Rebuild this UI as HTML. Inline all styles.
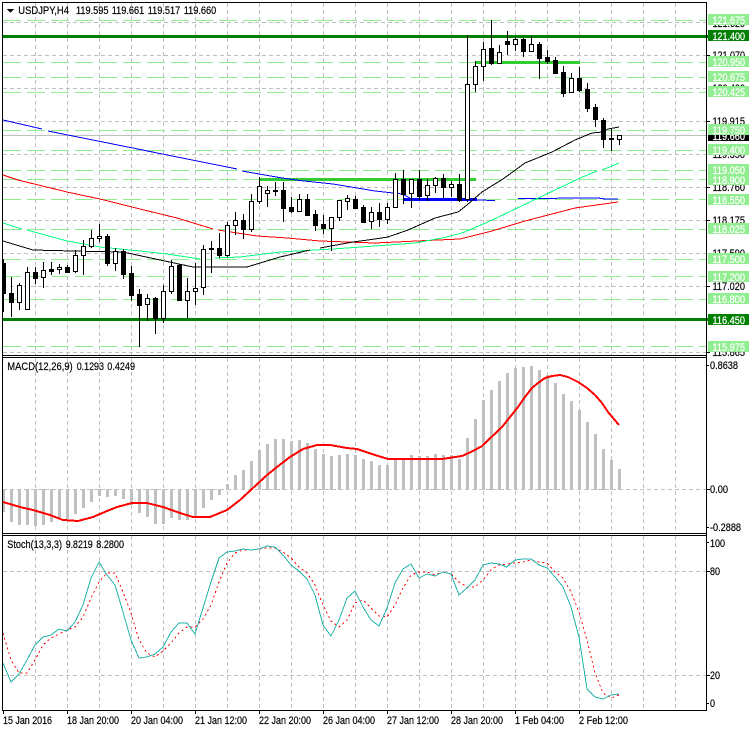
<!DOCTYPE html>
<html><head><meta charset="utf-8"><title>USDJPY,H4</title>
<style>
html,body{margin:0;padding:0;background:#fff;width:749px;height:731px;overflow:hidden}
svg{display:block}
text{font-family:"Liberation Sans",sans-serif;font-size:11px;fill:#000;stroke:#000;stroke-width:.2}
.w{fill:#fff;stroke:#fff;stroke-width:.25}
</style></head><body>
<svg width="749" height="731" viewBox="0 0 749 731" xmlns="http://www.w3.org/2000/svg">
<rect width="749" height="731" fill="#fff"/>
<defs>
<clipPath id="cm"><rect x="3" y="3" width="703" height="352"/></clipPath>
<clipPath id="cd"><rect x="3" y="358" width="703" height="175"/></clipPath>
<clipPath id="cs"><rect x="3" y="536" width="703" height="174"/></clipPath>
</defs>
<g shape-rendering="crispEdges" fill="none">
<!-- vertical grid -->
<path stroke="#c0c0c0" stroke-dasharray="4 3" d="M35.5 3V355M67.5 3V355M99.5 3V355M131.5 3V355M163.5 3V355M195.5 3V355M227.5 3V355M259.5 3V355M291.5 3V355M323.5 3V355M355.5 3V355M387.5 3V355M419.5 3V355M451.5 3V355M483.5 3V355M515.5 3V355M547.5 3V355M579.5 3V355M611.5 3V355M643.5 3V355M675.5 3V355
M35.5 358V533M67.5 358V533M99.5 358V533M131.5 358V533M163.5 358V533M195.5 358V533M227.5 358V533M259.5 358V533M291.5 358V533M323.5 358V533M355.5 358V533M387.5 358V533M419.5 358V533M451.5 358V533M483.5 358V533M515.5 358V533M547.5 358V533M579.5 358V533M611.5 358V533M643.5 358V533M675.5 358V533
M35.5 536V710M67.5 536V710M99.5 536V710M131.5 536V710M163.5 536V710M195.5 536V710M227.5 536V710M259.5 536V710M291.5 536V710M323.5 536V710M355.5 536V710M387.5 536V710M419.5 536V710M451.5 536V710M483.5 536V710M515.5 536V710M547.5 536V710M579.5 536V710M611.5 536V710M643.5 536V710M675.5 536V710"/>
<!-- horizontal grid -->
<path stroke="#c0c0c0" stroke-dasharray="4 3" d="M3 22.5H706M3 55.5H706M3 88.5H706M3 121.5H706M3 154.5H706M3 187.5H706M3 220.5H706M3 253.5H706M3 286.5H706M3 352.5H706M3 489.5H706M3 571.5H706M3 675.5H706"/>
<!-- light green levels -->
<path stroke="#90ee90" stroke-dasharray="18 6" d="M3 20.5H706M3 62.5H706M3 77.5H706M3 92.5H706M3 130.5H706M3 150.5H706M3 170.5H706M3 179.5H706M3 199.5H706M3 229.5H706M3 259.5H706M3 276.5H706M3 299.5H706M3 346.5H706"/>
<!-- bid line -->
<path stroke="#c0c0c0" d="M3 135.5H706"/>
<!-- strong levels -->
<rect x="3" y="35" width="705" height="3" fill="#008000"/>
<rect x="3" y="318" width="705" height="3" fill="#008000"/>
<rect x="259" y="178" width="217" height="3" fill="#32cd32"/>
<rect x="476" y="61" width="104" height="3" fill="#32cd32"/>
<rect x="403" y="198" width="74" height="3" fill="#0000ff"/>
<g clip-path="url(#cm)" stroke-width="1">
<!-- blue MA -->
<path stroke="#0000ff" d="M3 120L42 129M48 131L237 169M242 171L282 178L304 181L333 184L375 191L402 194L410 198M477 200L495 200.5M518 198.5L598 198L605 199L618 199"/>
<!-- red MA -->
<path stroke="#ff0000" d="M3 175L18 180L67 192L100 199L140 209L177 218L213 229M218 230L257 236L287 238L320 241L375 243L438 240L460 239L492 231L525 221L575 208L618 202"/>
<!-- green MA -->
<path stroke="#00ff7f" d="M3 223L22 229M27 230L67 241L100 247L140 251L167 254L200 259M215 258L240 257L280 252L333 249L375 246L415 243L442 238L462 233L488 222L532 201L578 179L597 171M602 170L619 163"/>
<!-- black MA -->
<path stroke="#000" d="M3 241L33 250L73 251L123 252L160 260L193 267L247 267L280 257L310 250M320 248L353 242L375 239L388 237L408 230L435 218L458 212L467 205L482 192L503 179L525 163L552 152L575 140L592 133L602 132L608 129L619 127"/>
<!-- wicks -->
<path stroke="#000" stroke-width="1" d="M3.5 259V312M11.5 277V317M19.5 283V310M27.5 267V309M35.5 267V284M43.5 262V288M51.5 262V275M59.5 264V274M67.5 265V272M75.5 250V273M83.5 240V275M91.5 230V248M99.5 224V242M107.5 234V266M115.5 248V271M123.5 249V279M131.5 266V301M139.5 289V347M147.5 294V321M155.5 297V334M163.5 285V323M171.5 260V294M179.5 264V301M187.5 278V318M195.5 263V305M203.5 245V295M211.5 241V273M219.5 233V258M227.5 222V257M235.5 212V235M243.5 214V239M251.5 194V232M259.5 177V204M267.5 186V207M275.5 182V196M283.5 182V222M291.5 197V213M299.5 194V212M307.5 194V215M315.5 210V231M323.5 215V234M331.5 217V251M339.5 200V221M347.5 195V210M355.5 196V209M363.5 205V223M371.5 207V229M379.5 203V227M387.5 203V224M395.5 173V208M403.5 170V204M411.5 179V208M419.5 170V200M427.5 179V201M435.5 177V193M443.5 174V198M451.5 181V197M459.5 174V202M467.5 35V202M475.5 61V92M483.5 42V81M491.5 20V65M499.5 45V64M507.5 31V55M515.5 37V51M523.5 38V57M531.5 36V51M539.5 42V79M547.5 50V64M555.5 57V74M563.5 66V97M571.5 73V93M579.5 67V92M587.5 83V112M595.5 104V127M603.5 118V148M611.5 129V151M619.5 135V145"/>
<!-- black bodies -->
<path stroke="#000" stroke-width="1" fill="#000" d="M1.5 263.5h4V293.5h-4zM9.5 293.5h4V302.5h-4zM33.5 272.5h4V278.5h-4zM49.5 269.5h4V271.5h-4zM65.5 267.5h4V272.5h-4zM105.5 236.5h4V263.5h-4zM121.5 251.5h4V274.5h-4zM129.5 273.5h4V295.5h-4zM137.5 294.5h4V305.5h-4zM153.5 298.5h4V318.5h-4zM177.5 265.5h4V300.5h-4zM209.5 248.5h4V249.5h-4zM217.5 248.5h4V255.5h-4zM241.5 220.5h4V229.5h-4zM273.5 190.5h4V191.5h-4zM281.5 190.5h4V208.5h-4zM289.5 207.5h4V211.5h-4zM305.5 199.5h4V215.5h-4zM313.5 214.5h4V225.5h-4zM321.5 224.5h4V228.5h-4zM353.5 199.5h4V208.5h-4zM361.5 207.5h4V222.5h-4zM377.5 212.5h4V219.5h-4zM401.5 179.5h4V194.5h-4zM417.5 179.5h4V196.5h-4zM441.5 178.5h4V187.5h-4zM457.5 184.5h4V200.5h-4zM489.5 48.5h4V63.5h-4zM505.5 41.5h4V44.5h-4zM521.5 39.5h4V51.5h-4zM537.5 44.5h4V58.5h-4zM545.5 57.5h4V61.5h-4zM553.5 60.5h4V73.5h-4zM561.5 72.5h4V93.5h-4zM577.5 78.5h4V90.5h-4zM585.5 89.5h4V108.5h-4zM593.5 107.5h4V119.5h-4zM601.5 120.5h4V139.5h-4zM609.5 138.5h4V139.5h-4z"/>
<!-- white bodies -->
<path stroke="#000" stroke-width="1" fill="#fff" d="M17.5 285.5h4V302.5h-4zM25.5 272.5h4V309.5h-4zM41.5 270.5h4V277.5h-4zM57.5 267.5h4V269.5h-4zM73.5 255.5h4V271.5h-4zM81.5 246.5h4V255.5h-4zM89.5 238.5h4V246.5h-4zM97.5 236.5h4V238.5h-4zM113.5 251.5h4V263.5h-4zM145.5 298.5h4V304.5h-4zM161.5 291.5h4V318.5h-4zM169.5 266.5h4V291.5h-4zM185.5 291.5h4V300.5h-4zM193.5 288.5h4V291.5h-4zM201.5 249.5h4V287.5h-4zM225.5 225.5h4V255.5h-4zM233.5 220.5h4V225.5h-4zM249.5 201.5h4V229.5h-4zM257.5 186.5h4V201.5h-4zM265.5 190.5h4V193.5h-4zM297.5 199.5h4V211.5h-4zM329.5 217.5h4V228.5h-4zM337.5 200.5h4V217.5h-4zM345.5 198.5h4V201.5h-4zM369.5 212.5h4V221.5h-4zM385.5 207.5h4V219.5h-4zM393.5 179.5h4V207.5h-4zM409.5 179.5h4V193.5h-4zM425.5 185.5h4V195.5h-4zM433.5 178.5h4V185.5h-4zM449.5 184.5h4V187.5h-4zM465.5 84.5h4V199.5h-4zM473.5 66.5h4V84.5h-4zM481.5 49.5h4V66.5h-4zM497.5 52.5h4V63.5h-4zM513.5 39.5h4V44.5h-4zM529.5 44.5h4V51.5h-4zM569.5 78.5h4V92.5h-4zM617.5 135.5h4V139.5h-4z"/>
</g>
<!-- MACD histogram -->
<g clip-path="url(#cd)">
<path stroke="#c0c0c0" stroke-width="3" d="M3.5 489V512M11.5 489V522M19.5 489V525M27.5 489V525M35.5 489V526M43.5 489V525M51.5 489V522M59.5 489V519M67.5 489V519M75.5 489V514M83.5 489V508M91.5 489V502M99.5 489V496M107.5 489V497M115.5 489V496M123.5 489V499M131.5 489V505M139.5 489V513M147.5 489V517M155.5 489V524M163.5 489V524M171.5 489V518M179.5 489V520M187.5 489V520M195.5 489V518M203.5 489V508M211.5 489V500M219.5 489V495M227.5 490V484M235.5 490V475M243.5 490V470M251.5 490V461M259.5 490V450M267.5 490V444M275.5 490V439M283.5 490V439M291.5 490V441M299.5 490V440M307.5 490V443M315.5 490V449M323.5 490V454M331.5 490V456M339.5 490V455M347.5 490V454M355.5 490V455M363.5 490V459M371.5 490V461M379.5 490V465M387.5 490V465M395.5 490V459M403.5 490V459M411.5 490V455M419.5 490V456M427.5 490V456M435.5 490V454M443.5 490V455M451.5 490V455M459.5 490V459M467.5 490V438M475.5 490V419M483.5 490V400M491.5 490V390M499.5 490V381M507.5 490V373M515.5 490V368M523.5 490V367M531.5 490V366M539.5 490V370M547.5 490V375M555.5 490V383M563.5 490V394M571.5 490V401M579.5 490V410M587.5 490V422M595.5 490V434M603.5 490V449M611.5 490V460M619.5 490V469"/>
<path stroke="#ff0000" stroke-width="2" stroke-linejoin="round" d="M3 502L20 507L33 510L50 515L63 520L78 521L93 517L107 511L117 507L132 503L147 503L163 507L180 513L193 517L210 517L227 510L240 500L253 488L267 475L277 467L290 457L303 449L317 445L330 445L347 448L357 449L375 455L388 459L442 459L462 456L473 451L482 446L502 427L518 407L525 397L532 388L538 383L545 378L552 376L560 375L568 377L578 382L587 388L595 395L602 403L608 412L619 425"/>
</g>
<!-- Stochastic -->
<g clip-path="url(#cs)">
<path stroke="#ff0000" stroke-dasharray="2 3" d="M3 633L11 660L19 673L27 673L35 660L43 645L51 638L59 634L67 630L75 627L83 617L91 598L99 582L107 573L115 573L123 592L131 613L139 640L147 653L155 657L163 651L171 643L179 633L187 627L195 627L203 619L211 605L219 582L227 563L235 553L243 550L251 550L259 549L267 548L275 548L283 552L291 558L299 567L307 573L315 585L323 605L331 621L339 627L347 620L355 603L363 600L371 608L379 616L387 617L395 605L403 588L411 575L419 572L427 572L435 575L443 572L451 574L459 582L467 587L475 587L483 580L491 570L499 565L507 564L515 563L523 562L531 560L539 562L547 563L555 572L563 578L571 592L579 612L587 640L595 673L603 693L611 698L619 695"/>
<path stroke="#20b2aa" d="M3 663L11 682L19 674L27 660L35 645L43 637L51 635L59 629L67 631L75 622L83 605L91 578L99 562L107 575L115 585L123 612L131 640L139 658L147 657L155 654L163 647L171 632L179 623L187 623L195 634L203 608L211 582L219 558L227 552L235 551L243 549L251 550L259 549L267 546L275 547L283 555L291 565L299 571L307 579L315 595L323 625L331 636L339 620L347 598L355 591L363 607L371 620L379 626L387 608L395 583L403 569L411 564L419 578L427 574L435 576L443 572L451 574L459 595L467 588L475 580L483 565L491 563L499 564L507 567L515 560L523 559L531 559L539 565L547 568L555 577L563 587L571 607L579 637L587 689L595 697L603 699L611 695L619 694"/>
</g>
<!-- frames -->
<path stroke="#000" d="M2.5 2V711M2 2.5H707M706.5 2V711M2 355.5H707M2 357.5H707M2 533.5H707M2 535.5H707M2 710.5H707"/>
<!-- ticks -->
<path stroke="#000" d="M707 55.5h3M707 121.5h3M707 187.5h3M707 220.5h3M707 286.5h3M707 352.5h3M707 489.5h3M707 571.5h3M707 675.5h3M707 365.5h2M707 527.5h2M707 542.5h2M707 703.5h2M3.5 710V714M67.5 710V714M131.5 710V714M195.5 710V714M259.5 710V714M323.5 710V714M387.5 710V714M451.5 710V714M515.5 710V714M579.5 710V714"/>
<!-- triangle -->
<path fill="#000" d="M7 9h7l-3.500 4z"/>
</g>
<!-- hidden axis labels -->
<text x="712.500" y="27" textLength="32.500" lengthAdjust="spacingAndGlyphs">121.620</text>
<text x="712.500" y="59" textLength="32.500" lengthAdjust="spacingAndGlyphs">121.070</text>
<text x="712.500" y="92" textLength="32.500" lengthAdjust="spacingAndGlyphs">120.490</text>
<text x="712.500" y="125" textLength="32.500" lengthAdjust="spacingAndGlyphs">119.915</text>
<text x="712.500" y="158" textLength="32.500" lengthAdjust="spacingAndGlyphs">119.350</text>
<text x="712.500" y="191" textLength="32.500" lengthAdjust="spacingAndGlyphs">118.760</text>
<text x="712.500" y="224" textLength="32.500" lengthAdjust="spacingAndGlyphs">118.175</text>
<text x="712.500" y="257" textLength="32.500" lengthAdjust="spacingAndGlyphs">117.590</text>
<text x="712.500" y="290" textLength="32.500" lengthAdjust="spacingAndGlyphs">117.020</text>
<text x="712.500" y="356" textLength="32.500" lengthAdjust="spacingAndGlyphs">115.865</text>
<!-- bid label -->
<g shape-rendering="crispEdges"><rect x="708" y="130" width="41" height="11" fill="#000"/></g>
<text class="w" x="712.500" y="140" textLength="32.500" lengthAdjust="spacingAndGlyphs">119.660</text>
<!-- level labels -->
<g shape-rendering="crispEdges" fill="#90ee90">
<rect x="708" y="14" width="41" height="11"/>
<rect x="708" y="30" width="41" height="11" fill="#008000"/>
<rect x="708" y="56" width="41" height="11"/>
<rect x="708" y="71" width="41" height="11"/>
<rect x="708" y="86" width="41" height="11"/>
<rect x="708" y="124" width="41" height="11"/>
<rect x="708" y="144" width="41" height="11"/>
<rect x="708" y="164" width="41" height="11"/>
<rect x="708" y="174" width="41" height="11"/>
<rect x="708" y="194" width="41" height="11"/>
<rect x="708" y="223" width="41" height="11"/>
<rect x="708" y="253" width="41" height="11"/>
<rect x="708" y="271" width="41" height="11"/>
<rect x="708" y="293" width="41" height="11"/>
<rect x="708" y="314" width="41" height="11" fill="#008000"/>
<rect x="708" y="341" width="41" height="11"/>
</g>
<g class="lv">
<text class="w" x="712.500" y="24" textLength="32.500" lengthAdjust="spacingAndGlyphs">121.675</text>
<text class="w" x="712.500" y="40" textLength="32.500" lengthAdjust="spacingAndGlyphs">121.400</text>
<text class="w" x="712.500" y="66" textLength="32.500" lengthAdjust="spacingAndGlyphs">120.950</text>
<text class="w" x="712.500" y="81" textLength="32.500" lengthAdjust="spacingAndGlyphs">120.675</text>
<text class="w" x="712.500" y="96" textLength="32.500" lengthAdjust="spacingAndGlyphs">120.425</text>
<text class="w" x="712.500" y="134" textLength="32.500" lengthAdjust="spacingAndGlyphs">119.750</text>
<text class="w" x="712.500" y="154" textLength="32.500" lengthAdjust="spacingAndGlyphs">119.400</text>
<text class="w" x="712.500" y="174" textLength="32.500" lengthAdjust="spacingAndGlyphs">119.050</text>
<text class="w" x="712.500" y="184" textLength="32.500" lengthAdjust="spacingAndGlyphs">118.900</text>
<text class="w" x="712.500" y="204" textLength="32.500" lengthAdjust="spacingAndGlyphs">118.550</text>
<text class="w" x="712.500" y="233" textLength="32.500" lengthAdjust="spacingAndGlyphs">118.025</text>
<text class="w" x="712.500" y="263" textLength="32.500" lengthAdjust="spacingAndGlyphs">117.500</text>
<text class="w" x="712.500" y="281" textLength="32.500" lengthAdjust="spacingAndGlyphs">117.200</text>
<text class="w" x="712.500" y="303" textLength="32.500" lengthAdjust="spacingAndGlyphs">116.800</text>
<text class="w" x="712.500" y="324" textLength="32.500" lengthAdjust="spacingAndGlyphs">116.450</text>
<text class="w" x="712.500" y="351" textLength="32.500" lengthAdjust="spacingAndGlyphs">115.975</text>
</g>
<!-- indicator axis -->
<text x="710" y="369" textLength="28" lengthAdjust="spacingAndGlyphs">0.8638</text>
<text x="710" y="493" textLength="18" lengthAdjust="spacingAndGlyphs">0.00</text>
<text x="710" y="531" textLength="31" lengthAdjust="spacingAndGlyphs">-0.2888</text>
<text x="710" y="547" textLength="15" lengthAdjust="spacingAndGlyphs">100</text>
<text x="710" y="575" textLength="10" lengthAdjust="spacingAndGlyphs">80</text>
<text x="710" y="679" textLength="10" lengthAdjust="spacingAndGlyphs">20</text>
<text x="710" y="707" textLength="5" lengthAdjust="spacingAndGlyphs">0</text>
<!-- titles -->
<text x="18.300" y="14" textLength="50.700" lengthAdjust="spacingAndGlyphs">USDJPY,H4</text>
<text x="76" y="14" textLength="32.500" lengthAdjust="spacingAndGlyphs">119.595</text>
<text x="111.700" y="14" textLength="32.500" lengthAdjust="spacingAndGlyphs">119.661</text>
<text x="147.700" y="14" textLength="32.500" lengthAdjust="spacingAndGlyphs">119.517</text>
<text x="183.700" y="14" textLength="32.500" lengthAdjust="spacingAndGlyphs">119.660</text>
<text x="7.300" y="370" textLength="65.400" lengthAdjust="spacingAndGlyphs">MACD(12,26,9)</text>
<text x="76.700" y="370" textLength="27.300" lengthAdjust="spacingAndGlyphs">0.1293</text>
<text x="107.300" y="370" textLength="27.700" lengthAdjust="spacingAndGlyphs">0.4249</text>
<text x="7.300" y="548" textLength="54.700" lengthAdjust="spacingAndGlyphs">Stoch(13,3,3)</text>
<text x="65.700" y="548" textLength="27" lengthAdjust="spacingAndGlyphs">9.8219</text>
<text x="96.300" y="548" textLength="27.700" lengthAdjust="spacingAndGlyphs">8.2800</text>
<!-- time axis -->
<text x="3" y="724" textLength="49" lengthAdjust="spacingAndGlyphs">15 Jan 2016</text>
<text x="67" y="724" textLength="52" lengthAdjust="spacingAndGlyphs">18 Jan 20:00</text>
<text x="131" y="724" textLength="52" lengthAdjust="spacingAndGlyphs">20 Jan 04:00</text>
<text x="195" y="724" textLength="52" lengthAdjust="spacingAndGlyphs">21 Jan 12:00</text>
<text x="259" y="724" textLength="52" lengthAdjust="spacingAndGlyphs">22 Jan 20:00</text>
<text x="323" y="724" textLength="52" lengthAdjust="spacingAndGlyphs">26 Jan 04:00</text>
<text x="387" y="724" textLength="52" lengthAdjust="spacingAndGlyphs">27 Jan 12:00</text>
<text x="451" y="724" textLength="52" lengthAdjust="spacingAndGlyphs">28 Jan 20:00</text>
<text x="515" y="724" textLength="49" lengthAdjust="spacingAndGlyphs">1 Feb 04:00</text>
<text x="579" y="724" textLength="49" lengthAdjust="spacingAndGlyphs">2 Feb 12:00</text>
</svg>
</body></html>
